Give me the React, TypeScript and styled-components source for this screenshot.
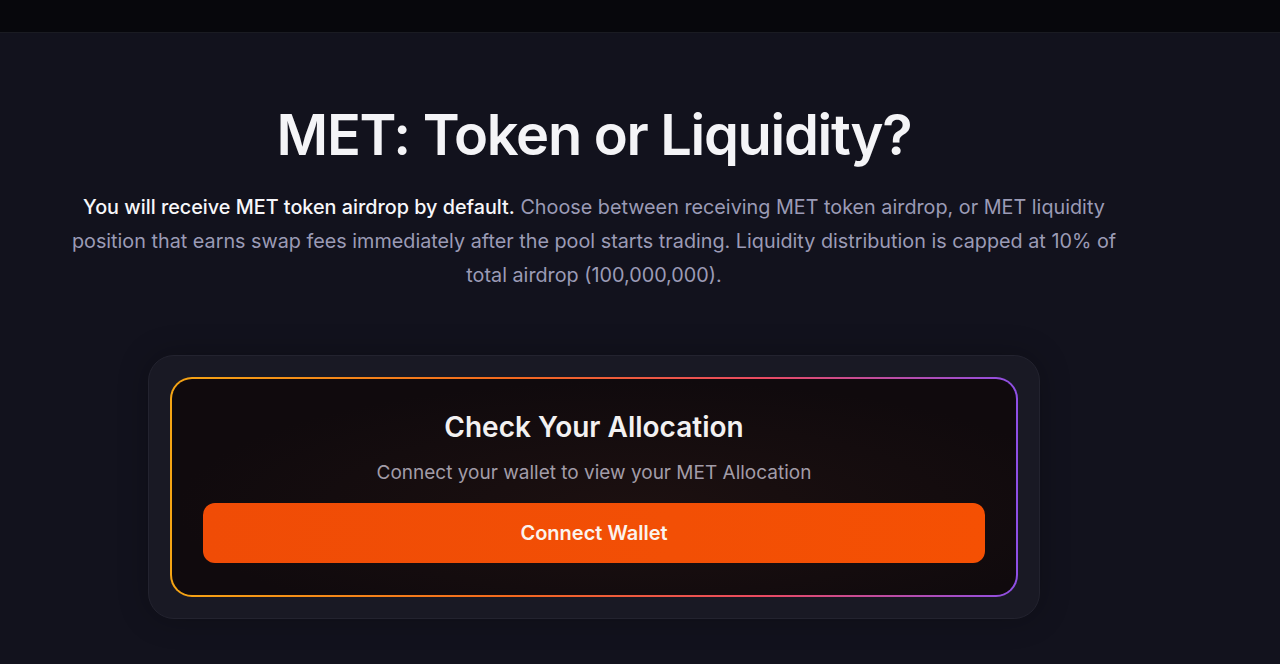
import styled, { createGlobalStyle } from "styled-components";

const GlobalStyle = createGlobalStyle`
  html, body {
    margin: 0;
    padding: 0;
    background: #12121d;
  }
  body {
    font-family: Inter, "Noto Sans", sans-serif;
    -webkit-font-smoothing: antialiased;
  }
  * {
    box-sizing: border-box;
  }
`;

const App = () => {
  return (
    <>
      <GlobalStyle />
      <Page>
        <TopBar />
        <Main>
          <Title>MET: Token or Liquidity?</Title>
          <Lead>
            <strong>You will receive MET token airdrop by default.</strong>{" "}
            Choose between receiving MET token airdrop, or MET liquidity
            position that earns swap fees immediately after the pool starts
            trading. Liquidity distribution is capped at 10% of total airdrop
            (100,000,000).
          </Lead>
          <OuterCard>
            <GradientFrame>
              <InnerCard>
                <CardTitle>Check Your Allocation</CardTitle>
                <CardText>Connect your wallet to view your MET Allocation</CardText>
                <ConnectButton type="button">Connect Wallet</ConnectButton>
              </InnerCard>
            </GradientFrame>
          </OuterCard>
        </Main>
      </Page>
    </>
  );
};
export default App;

const Page = styled.div`
  min-height: 664px;
  background: #12121d;
  display: flex;
  flex-direction: column;
`;

const TopBar = styled.div`
  height: 33px;
  background: #07070c;
  border-bottom: 1px solid #1a1b22;
`;

const Main = styled.main`
  width: 1188px;
  display: flex;
  flex-direction: column;
  align-items: center;
  padding-top: 64px;
`;

const Title = styled.h1`
  margin: 0;
  font-size: 56px;
  line-height: 76px;
  font-weight: 600;
  letter-spacing: -1.3px;
  color: #f4f4f7;
`;

const Lead = styled.p`
  margin: 17px 0 0;
  max-width: 1080px;
  text-align: center;
  font-size: 19.8px;
  line-height: 34px;
  color: #9b9bb6;
  strong {
    font-weight: 500;
    color: #f7f7fa;
  }
`;

const OuterCard = styled.div`
  margin-top: 63px;
  width: 892px;
  padding: 21px;
  border-radius: 26px;
  background: #191924;
  border: 1px solid #23232f;
  box-shadow: 0 0 30px rgba(0, 0, 0, 0.25);
`;

const GradientFrame = styled.div`
  padding: 2px;
  border-radius: 22px;
  background: linear-gradient(90deg, #f5a514 0%, #f3691e 40%, #e94a62 70%, #8e4fe6 100%);
`;

const InnerCard = styled.div`
  border-radius: 20px;
  background: radial-gradient(ellipse at 55% 60%, #1c1010 0%, #100a0d 70%);
  padding: 30px 31px 32px;
  display: flex;
  flex-direction: column;
  align-items: center;
`;

const CardTitle = styled.h2`
  margin: 0;
  font-size: 28px;
  line-height: 36px;
  font-weight: 600;
  color: #f3f1f1;
`;

const CardText = styled.p`
  margin: 16px 0 0;
  font-size: 19px;
  line-height: 24px;
  color: #a29ca8;
`;

const ConnectButton = styled.button`
  margin-top: 18px;
  width: 100%;
  height: 60px;
  border: none;
  border-radius: 12px;
  background: linear-gradient(90deg, #f04c06 0%, #f24f05 60%, #f55003 100%);
  color: #fbf3ee;
  font-family: Inter, "Noto Sans", sans-serif;
  font-size: 20px;
  font-weight: 600;
  cursor: pointer;
`;
